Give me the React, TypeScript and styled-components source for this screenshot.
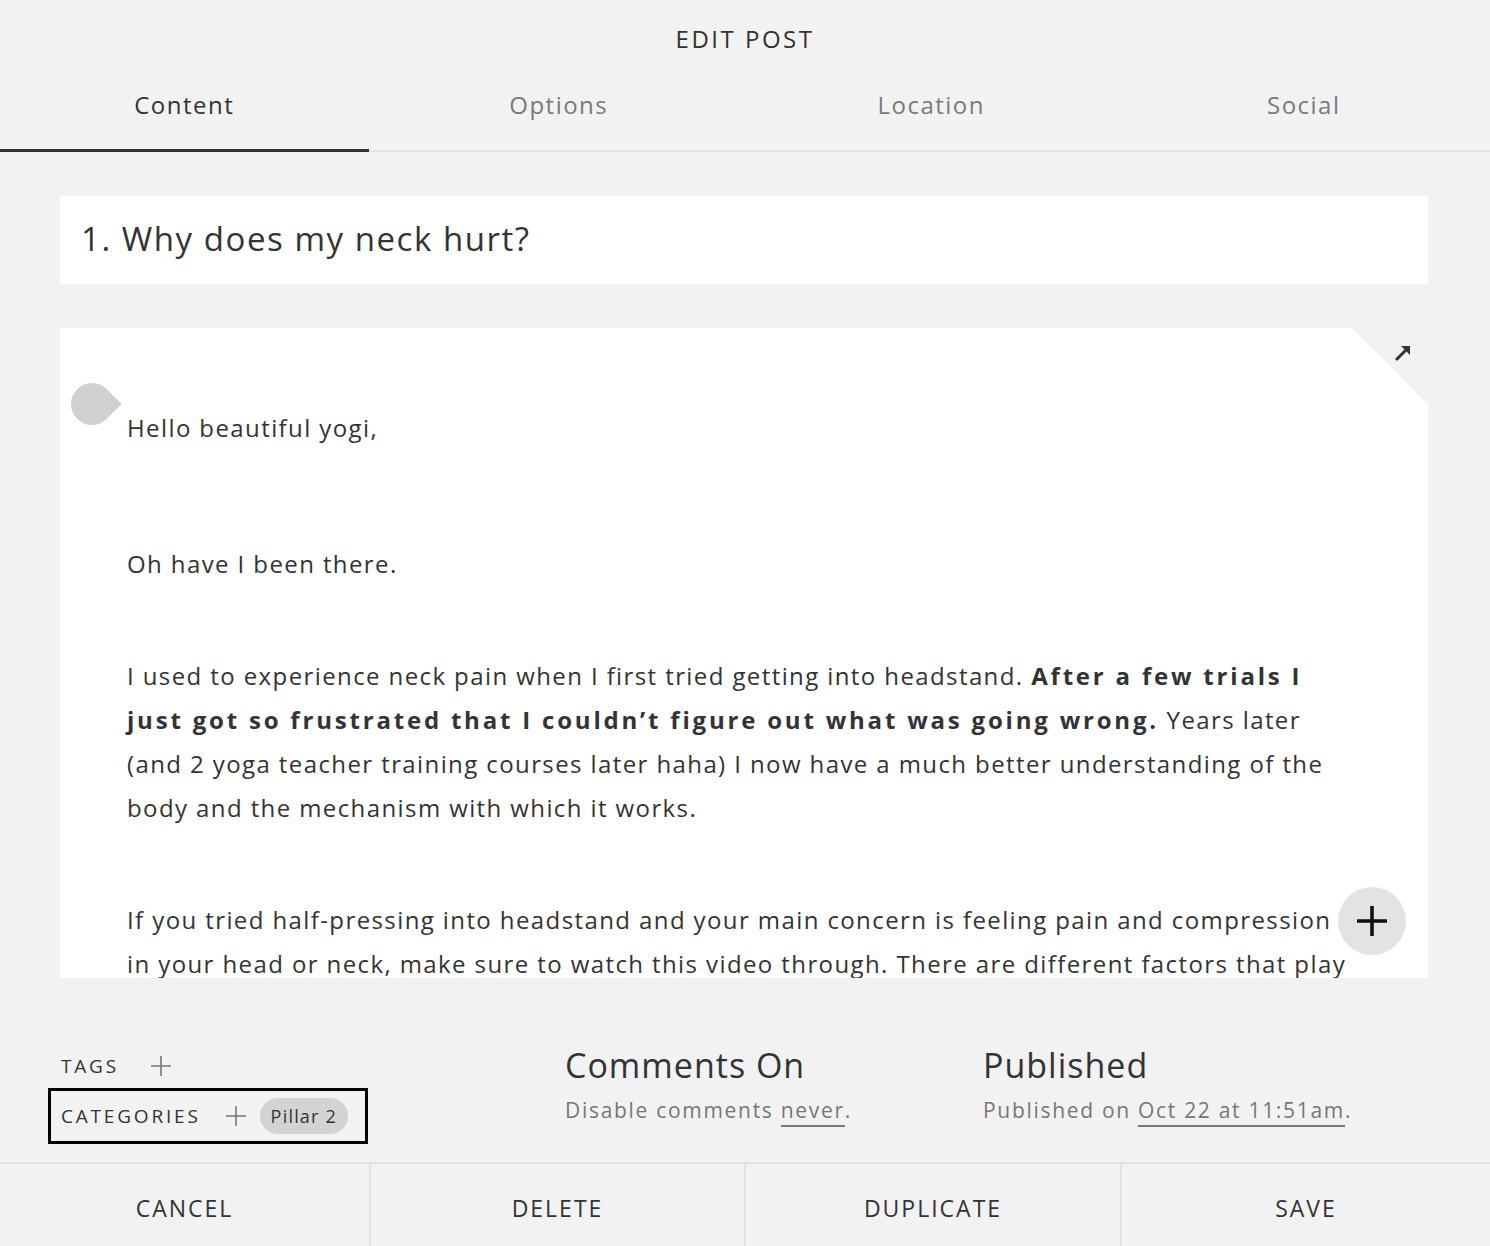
import React, { FC } from 'react';
import styled, { createGlobalStyle } from 'styled-components';

const GlobalStyle = createGlobalStyle`
  html, body {
    margin: 0;
    padding: 0;
    background: #f2f2f2;
  }
  body {
    font-family: 'Open Sans', 'Liberation Sans', sans-serif;
    color: #333;
  }
`;

const Page = styled.div`
  width: 1490px;
  height: 1246px;
  display: flex;
  flex-direction: column;
  background: #f2f2f2;
  overflow: hidden;
`;

const Header = styled.div`
  height: 78px;
  display: flex;
  align-items: center;
  justify-content: center;
  padding-bottom: 2px;
  box-sizing: border-box;
  font-size: 24px;
  letter-spacing: 2.5px;
  color: #333;
`;

const Tabs = styled.div`
  display: grid;
  grid-template-columns: repeat(4, 1fr);
  border-bottom: 2px solid #e2e2e2;
`;

const Tab = styled.div<{ $active?: boolean }>`
  height: 74px;
  box-sizing: border-box;
  display: flex;
  align-items: center;
  justify-content: center;
  padding-bottom: 18px;
  font-size: 24px;
  letter-spacing: 1.5px;
  color: ${({ $active }) => ($active ? '#333' : '#7a7a7a')};
  margin-bottom: -2px;
  border-bottom: 3px solid ${({ $active }) => ($active ? '#333' : 'transparent')};
  margin-right: ${({ $active }) => ($active ? '4px' : '0')};
`;

const Main = styled.div`
  padding: 44px 62px 0 60px;
  display: flex;
  flex-direction: column;
  gap: 44px;
`;

const TitleBox = styled.div`
  background: #fff;
  height: 88px;
  box-sizing: border-box;
  display: flex;
  align-items: center;
  padding: 0 0 4px 21px;
  font-size: 33px;
  letter-spacing: 1.55px;
  color: #333;
`;

const EditorWrap = styled.div`
  position: relative;
  height: 650px;
`;

const Editor = styled.div`
  height: 100%;
  background: #fff;
  overflow: hidden;
  clip-path: polygon(0 0, calc(100% - 76px) 0, 100% 77px, 100% 100%, 0 100%);
  padding: 78px 78px 0 67px;
  box-sizing: border-box;
`;

const Para = styled.p<{ $gap?: number }>`
  margin: 0 0 ${({ $gap }) => $gap ?? 68}px;
  font-size: 24px;
  line-height: 44px;
  letter-spacing: 1.4px;
  color: #333;

  b {
    font-weight: 700;
    letter-spacing: 2.8px;
  }
`;

const BlockHandle = styled.div`
  position: absolute;
  left: 11px;
  top: 55px;
  width: 42px;
  height: 42px;
  background: #d0d0d0;
  border-radius: 50% 0 50% 50%;
  transform: rotate(45deg);
`;

const ExpandButton = styled.div`
  position: absolute;
  right: 14px;
  top: 14px;
  width: 20px;
  height: 20px;
  display: flex;
  align-items: center;
  justify-content: center;
`;

const AddButton = styled.div`
  position: absolute;
  right: 22px;
  top: 559px;
  width: 68px;
  height: 68px;
  border-radius: 50%;
  background: #e3e3e3;
  display: flex;
  align-items: center;
  justify-content: center;
`;

const Meta = styled.div`
  margin-top: 66px;
  height: 118px;
  display: grid;
  grid-template-columns: 517px 418px 1fr;
  padding-left: 48px;
`;

const TaxColumn = styled.div`
  display: flex;
  flex-direction: column;
`;

const TaxRow = styled.div<{ $framed?: boolean }>`
  width: 320px;
  box-sizing: border-box;
  display: flex;
  align-items: center;
  gap: 22px;
  padding-left: 10px;
  height: ${({ $framed }) => ($framed ? '56px' : '44px')};
  border: 3px solid ${({ $framed }) => ($framed ? '#000' : 'transparent')};
`;

const TaxLabel = styled.span`
  font-size: 19px;
  letter-spacing: 2.8px;
  color: #333;
`;

const PlusIcon = styled.span<{ $offset: number }>`
  display: inline-flex;
  align-items: center;
  margin-left: ${({ $offset }) => $offset}px;
`;

const Pill = styled.span`
  height: 36px;
  padding: 0 11px;
  margin-left: -8px;
  border-radius: 18px;
  background: #d3d3d3;
  display: inline-flex;
  align-items: center;
  font-size: 18px;
  letter-spacing: 1.2px;
  color: #333;
`;

const InfoBlock = styled.div`
  display: flex;
  flex-direction: column;
`;

const InfoTitle = styled.div`
  font-size: 34px;
  letter-spacing: 1px;
  color: #333;
  line-height: 42px;
`;

const InfoText = styled.div`
  font-size: 21px;
  letter-spacing: 1.7px;
  color: #777;
  margin-top: 10px;

  span {
    border-bottom: 2px solid #777;
    padding-bottom: 1px;
  }
`;

const ActionBar = styled.div`
  margin-top: auto;
  height: 82px;
  display: grid;
  grid-template-columns: 369px 375px 376px 1fr;
  border-top: 2px solid #e3e3e3;
`;

const ActionButton = styled.div`
  display: flex;
  align-items: center;
  justify-content: center;
  padding-top: 6px;
  font-size: 23px;
  letter-spacing: 2px;
  color: #333;
  border-left: 2px solid #e3e3e3;

  &:first-child {
    border-left: none;
  }
`;

const Plus: FC<{ size: number; color: string; stroke: number }> = ({ size, color, stroke }) => (
  <svg width={size} height={size} viewBox="0 0 20 20">
    <path d="M10 0V20M0 10H20" stroke={color} strokeWidth={stroke} fill="none" />
  </svg>
);

const tabs = ['Content', 'Options', 'Location', 'Social'];
const actions = ['CANCEL', 'DELETE', 'DUPLICATE', 'SAVE'];

export default function App() {
  return (
    <Page>
      <GlobalStyle />
      <Header>EDIT POST</Header>
      <Tabs>
        {tabs.map((t, i) => (
          <Tab key={t} $active={i === 0}>{t}</Tab>
        ))}
      </Tabs>
      <Main>
        <TitleBox>1. Why does my neck hurt?</TitleBox>
        <EditorWrap>
          <Editor>
            <Para $gap={92}>Hello beautiful yogi,</Para>
            <Para>Oh have I been there.</Para>
            <Para>
              I used to experience neck pain when I first tried getting into headstand.{' '}
              <b>After a few trials I just got so frustrated that I couldn’t figure out what was going wrong.</b>{' '}
              Years later (and 2 yoga teacher training courses later haha) I now have a much better understanding of
              the body and the mechanism with which it works.
            </Para>
            <Para>
              If you tried half-pressing into headstand and your main concern is feeling pain and compression in your
              head or neck, make sure to watch this video through. There are different factors that play a role in
              this and we will go through each of them.
            </Para>
          </Editor>
          <BlockHandle />
          <ExpandButton>
            <svg width="18" height="18" viewBox="0 0 18 18">
              <path d="M2 16L13 5" stroke="#333" strokeWidth="3" strokeLinecap="round" />
              <path d="M6 3H15V12Z" fill="#333" />
            </svg>
          </ExpandButton>
          <AddButton>
            <Plus size={30} color="#111" stroke={2.4} />
          </AddButton>
        </EditorWrap>
      </Main>
      <Meta>
        <TaxColumn>
          <TaxRow>
            <TaxLabel>TAGS</TaxLabel>
            <PlusIcon $offset={10}>
              <Plus size={20} color="#777" stroke={1.6} />
            </PlusIcon>
          </TaxRow>
          <TaxRow $framed>
            <TaxLabel>CATEGORIES</TaxLabel>
            <PlusIcon $offset={3}>
              <Plus size={20} color="#777" stroke={1.6} />
            </PlusIcon>
            <Pill>Pillar 2</Pill>
          </TaxRow>
        </TaxColumn>
        <InfoBlock>
          <InfoTitle>Comments On</InfoTitle>
          <InfoText>
            Disable comments <span>never</span>.
          </InfoText>
        </InfoBlock>
        <InfoBlock>
          <InfoTitle>Published</InfoTitle>
          <InfoText>
            Published on <span>Oct 22 at 11:51am</span>.
          </InfoText>
        </InfoBlock>
      </Meta>
      <ActionBar>
        {actions.map((a) => (
          <ActionButton key={a}>{a}</ActionButton>
        ))}
      </ActionBar>
    </Page>
  );
}
